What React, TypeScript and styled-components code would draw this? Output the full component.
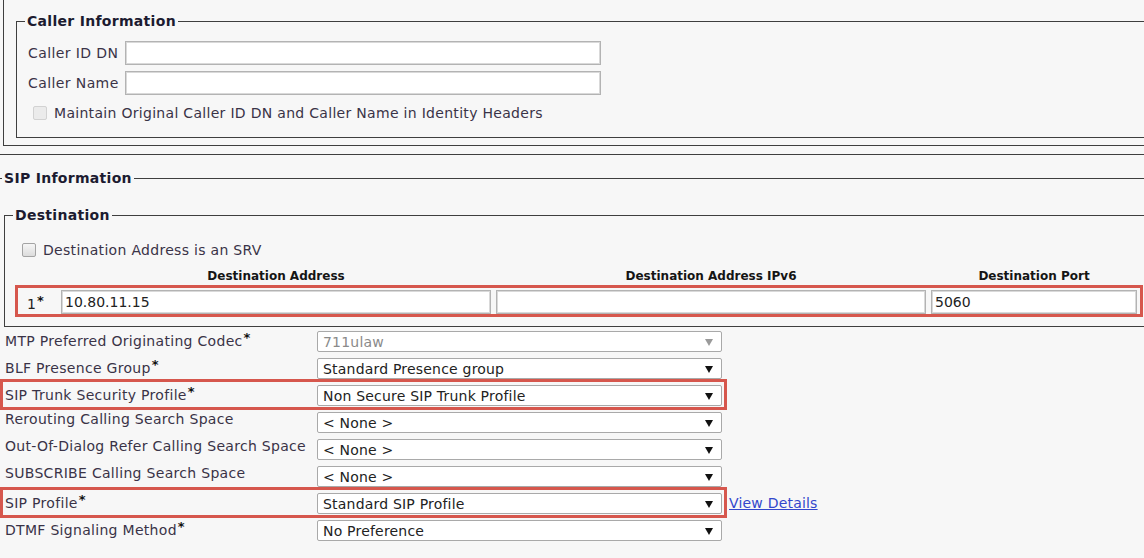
import styled, { createGlobalStyle } from 'styled-components';

const GlobalStyle = createGlobalStyle`
	html,
	body {
		margin: 0;
		padding: 0;
		background: #f7f7f7;
		overflow: hidden;
	}
	body {
		font-family: 'DejaVu Sans', Verdana, sans-serif;
		font-size: 14px;
		color: #3a3347;
	}
`;

const Page = styled.div`
	padding-left: 3px;
	height: 558px;
	overflow: hidden;
`;

const CallerOuter = styled.div`
	border-left: 1px solid #3f3f3f;
	border-bottom: 1px solid #3f3f3f;
	margin-right: -40px;
	padding: 13px 0 7px 12px;
`;

const Fieldset = styled.fieldset<{ $pad: string }>`
	margin: 0;
	min-width: 0;
	border: 1px solid #3f3f3f;
	padding: ${(p) => p.$pad};
`;

const Legend = styled.legend<{ $shift?: number }>`
	margin-left: ${(p) => p.$shift ?? 0}px;
	padding: 0 2px;
	font-weight: bold;
	font-size: 14px;
	line-height: 16px;
	letter-spacing: 0.3px;
	color: #1c1b30;
`;

const InputRow = styled.div<{ $top: number }>`
	display: flex;
	align-items: center;
	height: 24px;
	margin-top: ${(p) => p.$top}px;
	padding-left: 3px;
`;

const InputLabel = styled.span`
	width: 97px;
	letter-spacing: 0.4px;
`;

const TextBox = styled.div<{ $w: number }>`
	box-sizing: border-box;
	width: ${(p) => p.$w}px;
	height: 24px;
	padding: 0 3px;
	background: #fff;
	border: 1px solid #b3b3b3;
	box-shadow: inset 0 0 0 1px #d9d9d9;
	line-height: 22px;
	font-size: 14px;
	color: #222;
	white-space: nowrap;
	overflow: hidden;
`;

const CheckRow = styled.label<{ $top: number; $left: number }>`
	display: flex;
	align-items: center;
	gap: 7px;
	height: 20px;
	margin-top: ${(p) => p.$top}px;
	padding-left: ${(p) => p.$left}px;
	letter-spacing: 0.3px;
	color: #3a3347;
`;

const Box = styled.span<{ $disabled?: boolean }>`
	box-sizing: border-box;
	width: 14px;
	height: 14px;
	border-radius: 2px;
	border: 1px solid ${(p) => (p.$disabled ? '#d2d2d2' : '#a4a4a4')};
	background: ${(p) => (p.$disabled ? '#ebebeb' : 'linear-gradient(#f6f6f6, #dcdcdc)')};
`;

const SipWrap = styled.div`
	margin: 8px -40px 0 -13px;
	border-top: 1px solid #3f3f3f;
	padding-top: 15px;
`;

const DestFieldset = styled(Fieldset)`
	margin-top: 21px;
`;

const DestRow = styled.div<{ $framed?: boolean }>`
	display: grid;
	grid-template-columns: 38px 430px 430px 206px;
	column-gap: 5px;
	align-items: center;
	margin-left: 2px;
	width: max-content;
	border-style: solid;
	border-color: ${(p) => (p.$framed ? '#d6574d' : 'transparent')};
	border-width: ${(p) => (p.$framed ? '3px' : '0 3px')};
	padding: ${(p) => (p.$framed ? '2px 3px 0 0' : '0 3px 0 0')};
	margin-top: ${(p) => (p.$framed ? 2 : 9)}px;
`;

const ColHead = styled.div`
	text-align: center;
	font-weight: bold;
	font-size: 12px;
	line-height: 14px;
	color: #151515;
`;

const Index = styled.span`
	padding-left: 9px;
	color: #222;
`;

const Req = styled.span`
	vertical-align: 4px;
	font-size: 13px;
	font-weight: bold;
	color: #111;
	margin-left: 1px;
`;

const FormRow = styled.div`
	display: flex;
	align-items: flex-start;
	height: 27px;
	padding-left: 1px;
`;

const Field = styled.div<{ $highlight?: boolean }>`
	position: relative;
	display: grid;
	grid-template-columns: 312px 405px;
	height: 27px;
	&::after {
		content: '';
		display: ${(p) => (p.$highlight ? 'block' : 'none')};
		position: absolute;
		inset: -2px -5px -2px -5px;
		border: 3px solid #d6574d;
		pointer-events: none;
	}
`;

const FieldLabel = styled.span`
	padding-top: 3px;
	line-height: 16px;
	letter-spacing: 0.3px;
	white-space: nowrap;
	color: #3a3347;
`;

const SelectBox = styled.div<{ $disabled?: boolean }>`
	box-sizing: border-box;
	display: flex;
	align-items: center;
	justify-content: space-between;
	margin-top: 4px;
	height: 21px;
	padding: 0 8px 0 5px;
	background: #fff;
	border: 1px solid #a9a9a9;
	border-radius: 2px;
	font-size: 14px;
	letter-spacing: 0.2px;
	color: ${(p) => (p.$disabled ? '#8a8a8a' : '#222')};
`;

const Arrow = styled.svg`
	width: 8px;
	height: 8px;
`;

const DetailsLink = styled.a`
	margin: 6px 0 0 7px;
	color: #3347cc;
	text-decoration: underline;
	letter-spacing: 0.2px;
	line-height: 16px;
`;

type Row = { label: string; required?: boolean; value: string; disabled?: boolean; highlight?: boolean; link?: boolean };

const rows: Row[] = [
	{ label: 'MTP Preferred Originating Codec', required: true, value: '711ulaw', disabled: true },
	{ label: 'BLF Presence Group', required: true, value: 'Standard Presence group' },
	{ label: 'SIP Trunk Security Profile', required: true, value: 'Non Secure SIP Trunk Profile', highlight: true },
	{ label: 'Rerouting Calling Search Space', value: '< None >' },
	{ label: 'Out-Of-Dialog Refer Calling Search Space', value: '< None >' },
	{ label: 'SUBSCRIBE Calling Search Space', value: '< None >' },
	{ label: 'SIP Profile', required: true, value: 'Standard SIP Profile', highlight: true, link: true },
	{ label: 'DTMF Signaling Method', required: true, value: 'No Preference' },
];

function Select({ value, disabled }: { value: string; disabled?: boolean }) {
	return (
		<SelectBox $disabled={disabled}>
			<span>{value}</span>
			<Arrow viewBox="0 0 8 8">
				<path d="M0 1h8L4 8z" fill={disabled ? '#9a9a9a' : '#111'} />
			</Arrow>
		</SelectBox>
	);
}

export default function App() {
	return (
		<Page>
			<GlobalStyle />
			<CallerOuter>
				<Fieldset $pad="0 0 14px 8px">
					<Legend>Caller Information</Legend>
					<InputRow $top={12}>
						<InputLabel>Caller ID DN</InputLabel>
						<TextBox $w={476} />
					</InputRow>
					<InputRow $top={6}>
						<InputLabel>Caller Name</InputLabel>
						<TextBox $w={476} />
					</InputRow>
					<CheckRow $top={8} $left={8}>
						<Box $disabled />
						Maintain Original Caller ID DN and Caller Name in Identity Headers
					</CheckRow>
				</Fieldset>
			</CallerOuter>

			<SipWrap>
				<Fieldset $pad="0 0 60px 13px">
					<Legend $shift={-2}>SIP Information</Legend>
					<DestFieldset $pad="0 0 9px 8px">
						<Legend>Destination</Legend>
						<CheckRow $top={17} $left={9}>
							<Box />
							Destination Address is an SRV
						</CheckRow>
						<DestRow>
							<span />
							<ColHead>Destination Address</ColHead>
							<ColHead>Destination Address IPv6</ColHead>
							<ColHead>Destination Port</ColHead>
						</DestRow>
						<DestRow $framed>
							<Index>
								1<Req>*</Req>
							</Index>
							<TextBox $w={430}>10.80.11.15</TextBox>
							<TextBox $w={430} />
							<TextBox $w={206}>5060</TextBox>
						</DestRow>
					</DestFieldset>

					{rows.map((r) => (
						<FormRow key={r.label}>
							<Field $highlight={r.highlight}>
								<FieldLabel>
									{r.label}
									{r.required && <Req>*</Req>}
								</FieldLabel>
								<Select value={r.value} disabled={r.disabled} />
							</Field>
							{r.link && <DetailsLink href="#">View Details</DetailsLink>}
						</FormRow>
					))}
				</Fieldset>
			</SipWrap>
		</Page>
	);
}
